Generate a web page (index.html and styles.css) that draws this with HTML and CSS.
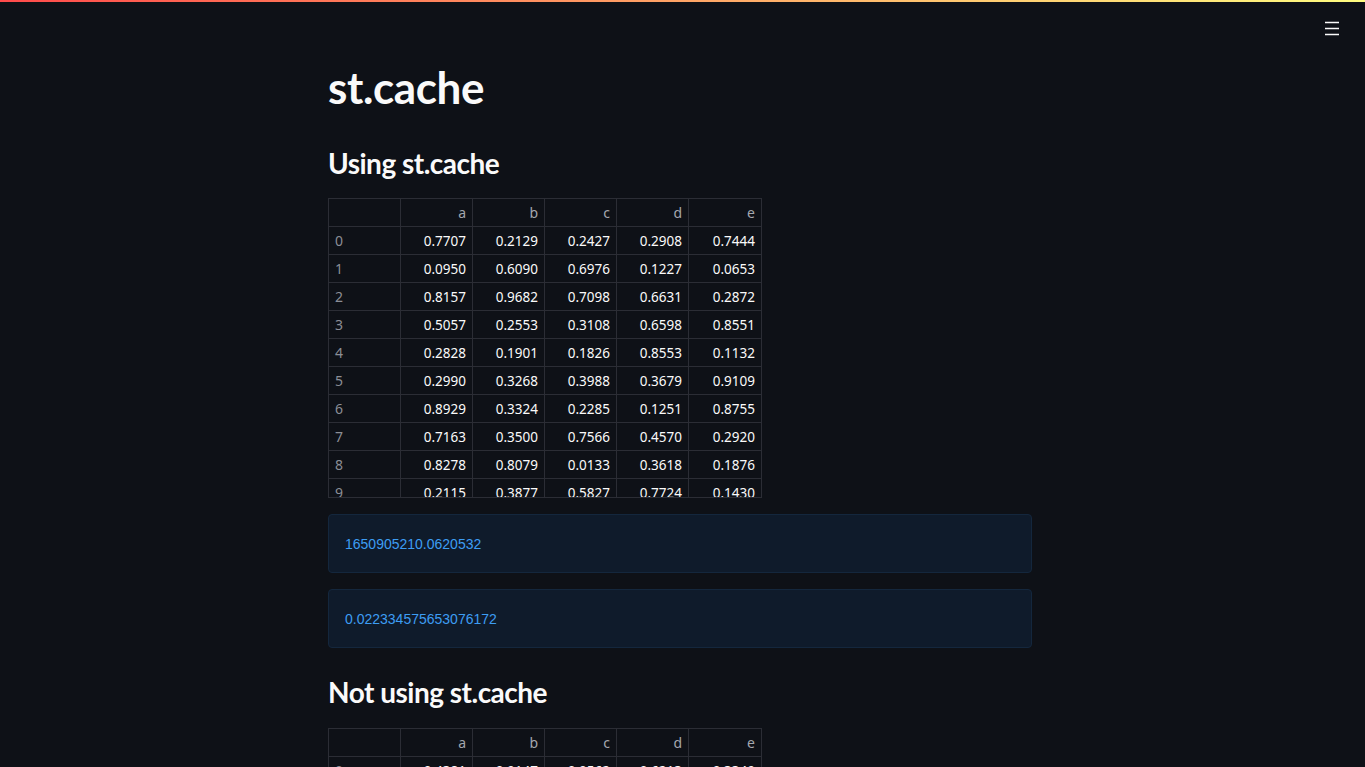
FILE: index.html
```html
<!DOCTYPE html>
<html>
<head>
<meta charset="utf-8">
<link rel="stylesheet" href="styles.css">
</head>
<body>
<div class="decoration"></div>
<header class="toolbar">
  <button class="menu" aria-label="menu">
    <svg width="16" height="16" viewBox="0 0 16 16"><path d="M1 2.5h14M1 8.5h14M1 14.5h14" stroke="#fafafa" stroke-width="1.6" fill="none"/></svg>
  </button>
</header>
<main class="app">
  <div class="block">
    <h1 class="title">st.cache</h1>
    <h2 class="subtitle">Using st.cache</h2>
    <div class="df">
      <div class="row head"><div class="c idx"></div><div class="c">a</div><div class="c">b</div><div class="c">c</div><div class="c">d</div><div class="c">e</div></div>
      <div class="row"><div class="c idx">0</div><div class="c">0.7707</div><div class="c">0.2129</div><div class="c">0.2427</div><div class="c">0.2908</div><div class="c">0.7444</div></div>
      <div class="row"><div class="c idx">1</div><div class="c">0.0950</div><div class="c">0.6090</div><div class="c">0.6976</div><div class="c">0.1227</div><div class="c">0.0653</div></div>
      <div class="row"><div class="c idx">2</div><div class="c">0.8157</div><div class="c">0.9682</div><div class="c">0.7098</div><div class="c">0.6631</div><div class="c">0.2872</div></div>
      <div class="row"><div class="c idx">3</div><div class="c">0.5057</div><div class="c">0.2553</div><div class="c">0.3108</div><div class="c">0.6598</div><div class="c">0.8551</div></div>
      <div class="row"><div class="c idx">4</div><div class="c">0.2828</div><div class="c">0.1901</div><div class="c">0.1826</div><div class="c">0.8553</div><div class="c">0.1132</div></div>
      <div class="row"><div class="c idx">5</div><div class="c">0.2990</div><div class="c">0.3268</div><div class="c">0.3988</div><div class="c">0.3679</div><div class="c">0.9109</div></div>
      <div class="row"><div class="c idx">6</div><div class="c">0.8929</div><div class="c">0.3324</div><div class="c">0.2285</div><div class="c">0.1251</div><div class="c">0.8755</div></div>
      <div class="row"><div class="c idx">7</div><div class="c">0.7163</div><div class="c">0.3500</div><div class="c">0.7566</div><div class="c">0.4570</div><div class="c">0.2920</div></div>
      <div class="row"><div class="c idx">8</div><div class="c">0.8278</div><div class="c">0.8079</div><div class="c">0.0133</div><div class="c">0.3618</div><div class="c">0.1876</div></div>
      <div class="row"><div class="c idx">9</div><div class="c">0.2115</div><div class="c">0.3877</div><div class="c">0.5827</div><div class="c">0.7724</div><div class="c">0.1430</div></div>
    </div>
    <div class="info">1650905210.0620532</div>
    <div class="info">0.022334575653076172</div>
    <h2 class="subtitle second">Not using st.cache</h2>
    <div class="df df2">
      <div class="row head"><div class="c idx"></div><div class="c">a</div><div class="c">b</div><div class="c">c</div><div class="c">d</div><div class="c">e</div></div>
      <div class="row"><div class="c idx">0</div><div class="c">0.4381</div><div class="c">0.9147</div><div class="c">0.0562</div><div class="c">0.6213</div><div class="c">0.3349</div></div>
      <div class="row"><div class="c idx">1</div><div class="c">0.1875</div><div class="c">0.5520</div><div class="c">0.8034</div><div class="c">0.2716</div><div class="c">0.9461</div></div>
      <div class="row"><div class="c idx">2</div><div class="c">0.7302</div><div class="c">0.0417</div><div class="c">0.3689</div><div class="c">0.5128</div><div class="c">0.6095</div></div>
    </div>
  </div>
</main>
</body>
</html>
```
FILE: styles.css
```css
* { box-sizing: border-box; }
html, body {
  margin: 0;
  padding: 0;
  background: #0e1117;
  color: #fafafa;
  font-family: "Lato", "Noto Sans", sans-serif;
  height: 100%;
  overflow: hidden;
}
.decoration {
  position: fixed;
  top: 0; left: 0; right: 0;
  height: 2px;
  background: linear-gradient(90deg, #ff4b4b, #fffd80);
  z-index: 5;
}
.toolbar {
  position: fixed;
  top: 0; right: 0;
  padding: 20px 25px 0 0;
  z-index: 4;
}
.menu {
  background: none;
  border: none;
  padding: 0;
  width: 16px;
  height: 16px;
  display: block;
}
.app {
  display: flex;
  justify-content: center;
  padding-right: 5px;
}
.block {
  width: 704px;
  padding-top: 61px;
}
.title {
  font-size: 44px;
  font-weight: 700;
  margin: 0;
  line-height: 52px;
  letter-spacing: -0.4px;
}
.subtitle {
  font-size: 28px;
  font-weight: 700;
  margin: 32px 0 0;
  line-height: 36px;
  letter-spacing: -0.5px;
}
.subtitle.second { margin-top: 26px; }
.df {
  margin-top: 17px;
  width: 434px;
  height: 300px;
  border: 1px solid #2b2d35;
  overflow: hidden;
  font-family: "Noto Sans", sans-serif;
  font-size: 13.5px;
}
.df2 { margin-top: 18px; }
.row {
  display: flex;
  height: 28px;
  border-bottom: 1px solid #2b2d35;
}
.c {
  width: 72px;
  border-right: 1px solid #2b2d35;
  padding: 0 6px;
  display: flex;
  align-items: center;
  justify-content: flex-end;
  color: #fafafa;
}
.c:last-child { border-right: none; }
.c.idx { justify-content: flex-start; color: #8b8e96; padding-left: 6px; font-size: 14px; }
.head .c { color: #a4a7ae; font-size: 14px; }
.info {
  margin-top: 16px;
  height: 59px;
  border: 1px solid #14273d;
  background: #0f1b2b;
  border-radius: 4px;
  padding: 0 16px;
  display: flex;
  align-items: center;
  font-family: "Liberation Sans", sans-serif;
  font-size: 14px;
  color: #3d9df3;
}
```
